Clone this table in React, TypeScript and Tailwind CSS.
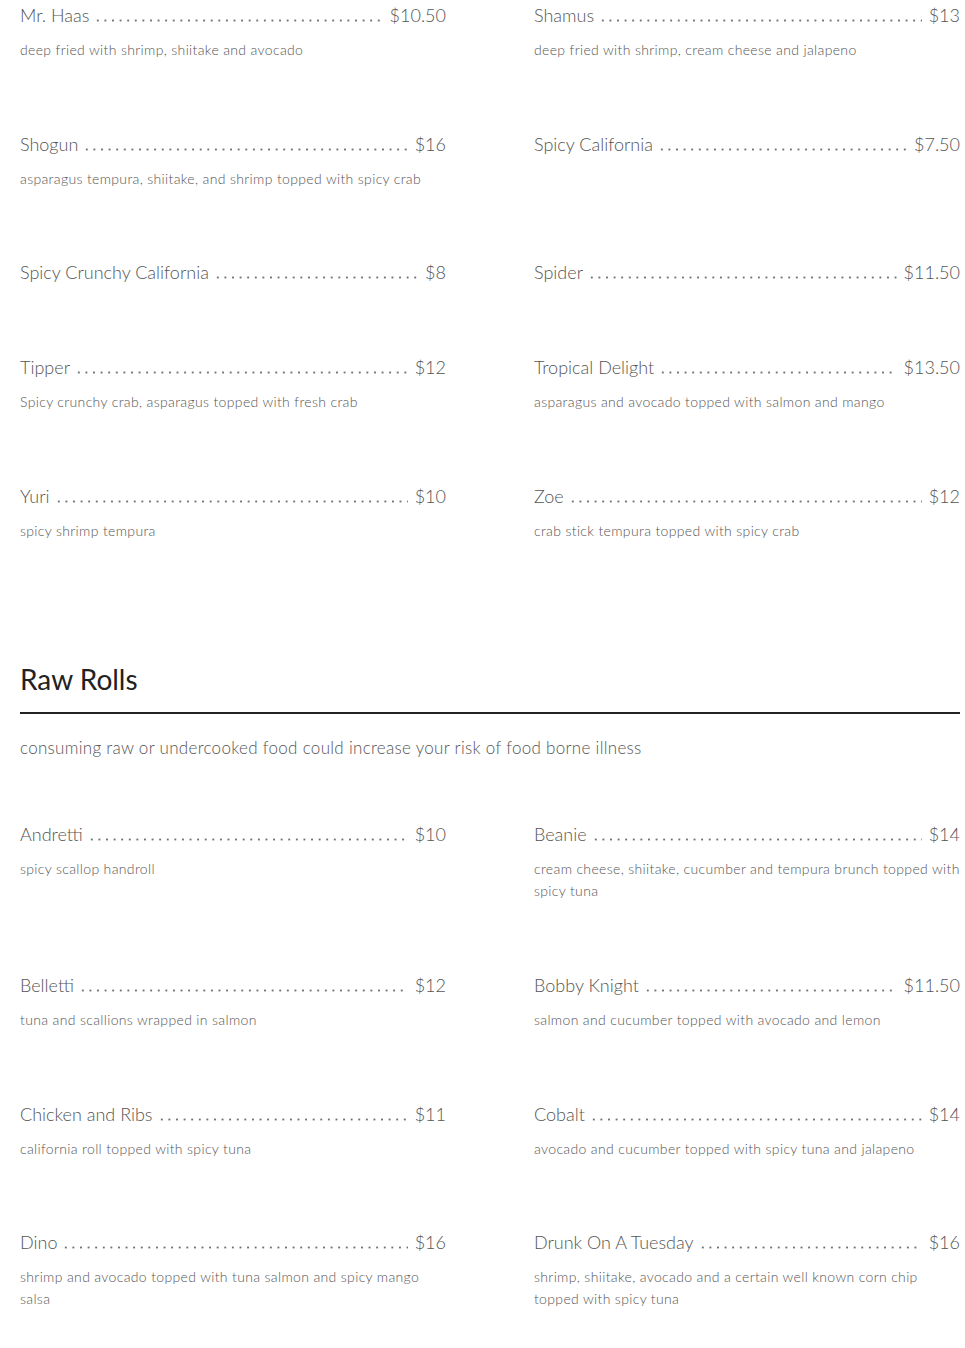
const fried = [
  { name: 'Mr. Haas', price: '$10.50', desc: 'deep fried with shrimp, shiitake and avocado' },
  { name: 'Shamus', price: '$13', desc: 'deep fried with shrimp, cream cheese and jalapeno' },
  { name: 'Shogun', price: '$16', desc: 'asparagus tempura, shiitake, and shrimp topped with spicy crab' },
  { name: 'Spicy California', price: '$7.50', desc: '' },
  { name: 'Spicy Crunchy California', price: '$8', desc: '' },
  { name: 'Spider', price: '$11.50', desc: '' },
  { name: 'Tipper', price: '$12', desc: 'Spicy crunchy crab, asparagus topped with fresh crab' },
  { name: 'Tropical Delight', price: '$13.50', desc: 'asparagus and avocado topped with salmon and mango' },
  { name: 'Yuri', price: '$10', desc: 'spicy shrimp tempura' },
  { name: 'Zoe', price: '$12', desc: 'crab stick tempura topped with spicy crab' },
];

const raw = [
  { name: 'Andretti', price: '$10', desc: 'spicy scallop handroll' },
  { name: 'Beanie', price: '$14', desc: 'cream cheese, shiitake, cucumber and tempura brunch topped with spicy tuna' },
  { name: 'Belletti', price: '$12', desc: 'tuna and scallions wrapped in salmon' },
  { name: 'Bobby Knight', price: '$11.50', desc: 'salmon and cucumber topped with avocado and lemon' },
  { name: 'Chicken and Ribs', price: '$11', desc: 'california roll topped with spicy tuna' },
  { name: 'Cobalt', price: '$14', desc: 'avocado and cucumber topped with spicy tuna and jalapeno' },
  { name: 'Dino', price: '$16', desc: 'shrimp and avocado topped with tuna salmon and spicy mango salsa' },
  { name: 'Drunk On A Tuesday', price: '$16', desc: 'shrimp, shiitake, avocado and a certain well known corn chip topped with spicy tuna' },
];

type Item = { name: string; price: string; desc: string };

function MenuItem({ item }: { item: Item }) {
  return (
    <div className={item.desc ? 'mb-[68.6px]' : 'mb-[67px]'}>
      <div className="flex text-[18px] leading-[28px] text-[#555] font-light">
        <span className="whitespace-nowrap">{item.name}</span>
        {/* dot leader */}
        <span className="flex-1 self-end mb-[7px] ml-[5px] mr-[7px] h-[3px] bg-[radial-gradient(circle,#6f6f6f_0.9px,transparent_1.25px)] bg-size-[7.6px_3px] bg-repeat-x" />
        <span className="whitespace-nowrap">{item.price}</span>
      </div>
      {item.desc && (
        <p className="mt-[10px] text-[14px] tracking-[0.35px] leading-[22px] text-[#555] font-light">{item.desc}</p>
      )}
    </div>
  );
}

export default function App() {
  return (
    <div className="bg-white w-[965px] min-h-[1348px] pl-5 pr-[5px] pt-px font-['Lato',sans-serif]">
      <div className="grid grid-cols-2 gap-x-[88px]">
        {fried.map(i => <MenuItem key={i.name} item={i} />)}
      </div>

      <div className="mt-[51px]">
        <h2 className="text-[28px] leading-[36px] text-[#222]">Raw Rolls</h2>
        <div className="mt-[15px] border-t-2 border-[#222]" />
        <p className="mt-[22px] mb-[60px] text-[17px] tracking-[0.3px] leading-[24px] text-[#555] font-light">
          consuming raw or undercooked food could increase your risk of food borne illness
        </p>
      </div>

      <div className="grid grid-cols-2 gap-x-[88px]">
        {raw.map(i => <MenuItem key={i.name} item={i} />)}
      </div>
    </div>
  );
}
